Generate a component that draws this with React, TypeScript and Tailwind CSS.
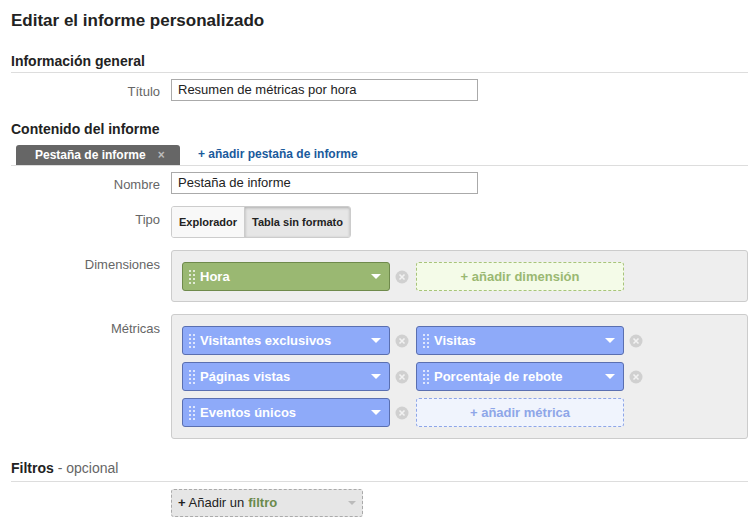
import React from "react";

const Drag = () => (
  <span className="grid grid-cols-2 gap-x-[2px] gap-y-[2px] mr-[5px]">
    {Array.from({ length: 8 }).map((_, i) => (
      <span key={i} className="w-[2px] h-[2px] bg-white/70" />
    ))}
  </span>
);

const Caret = () => (
  <span className="ml-auto w-0 h-0 border-l-[5px] border-r-[5px] border-t-[5px] border-l-transparent border-r-transparent border-t-white" />
);

const XCircle = () => (
  <svg width="14" height="14" viewBox="0 0 14 14" className="mx-[5px] shrink-0">
    <circle cx="7" cy="7" r="6.5" fill="#d0d0d0" />
    <path d="M4.5 4.5l5 5M9.5 4.5l-5 5" stroke="#f2f2f2" strokeWidth="1.6" />
  </svg>
);

const Chip = ({ label, color }: { label: string; color: "green" | "blue" }) => (
  <div className="flex items-center">
    <div
      className={
        "w-[208px] h-[29px] rounded-[3px] border flex items-center pl-[6px] pr-[8px] text-white font-bold text-[13px] " +
        (color === "green" ? "bg-[#9ab872] border-[#6f8a4c]" : "bg-[#8eaaf9] border-[#5a6fb0]")
      }
    >
      <Drag />
      <span>{label}</span>
      <Caret />
    </div>
    <XCircle />
  </div>
);

const Add = ({ label, color }: { label: string; color: "green" | "blue" }) => (
  <div className="flex items-center">
    <div
      className={
        "w-[208px] h-[29px] rounded-[3px] border border-dashed flex items-center justify-center font-bold text-[13px] " +
        (color === "green"
          ? "bg-[#f4fbe8] border-[#a8c47a] text-[#9ab872]"
          : "bg-[#f0f4fd] border-[#8ea6e8] text-[#8ea6e8]")
      }
    >
      {label}
    </div>
    <span className="w-[24px]" />
  </div>
);

const Row = ({ label, children, top = "pt-[3px]" }: { label: string; children: React.ReactNode; top?: string }) => (
  <div className="flex">
    <div className={"w-[160px] text-right text-[13px] text-[#666] " + top}>{label}</div>
    <div className="ml-[11px] flex-1">{children}</div>
  </div>
);

export default function App() {
  return (
    <div className="w-[756px] h-[522px] bg-white text-[#222] overflow-hidden" style={{ fontFamily: '"Liberation Sans", Arial, sans-serif' }}>
      <div className="pl-[11px] pr-[8px]">
        <h1 className="text-[17px] font-bold pt-[10px] leading-[22px]">Editar el informe personalizado</h1>
        <h2 className="text-[14px] font-bold mt-[20px] leading-[18px] pb-[2px] border-b border-[#ddd]">Información general</h2>
      </div>
      <div className="mt-[6px]">
        <Row label="Título">
          <div className="w-[307px] h-[22px] border border-[#aaa] flex items-center px-[6px] text-[13px]">Resumen de métricas por hora</div>
        </Row>
      </div>
      <div className="pl-[11px] pr-[8px]">
        <h2 className="text-[14px] font-bold mt-[18px] leading-[18px]">Contenido del informe</h2>
        <div className="flex items-end mt-[7px] border-b border-[#ddd] pl-[5px]">
          <div className="w-[164px] h-[20px] bg-[#666] rounded-t-[3px] text-white font-bold text-[12px] flex items-center pl-[19px]">
            Pestaña de informe<span className="ml-[12px] text-[#bbb]">×</span>
          </div>
          <div className="ml-[18px] mb-[2px] text-[12px] font-bold text-[#1a5a9c]">+ añadir pestaña de informe</div>
        </div>
      </div>
      <div className="mt-[6px] flex flex-col gap-[12px] pr-[8px]">
        <Row label="Nombre">
          <div className="w-[307px] h-[22px] border border-[#aaa] flex items-center px-[6px] text-[13px]">Pestaña de informe</div>
        </Row>
        <Row label="Tipo" top="pt-[4px]">
          <div className="inline-flex h-[32px] border border-[#ccc] rounded-[3px] text-[11px] font-bold overflow-hidden">
            <div className="px-[7px] flex items-center bg-[#f8f8f8]">Explorador</div>
            <div className="px-[7px] flex items-center bg-[#e6e6e6] border-l border-[#ccc] shadow-[inset_0_1px_3px_rgba(0,0,0,0.25)]">Tabla sin formato</div>
          </div>
        </Row>
        <Row label="Dimensiones" top="pt-[5px]">
          <div className="bg-[#eeeeee] border border-[#ccc] rounded-[3px] px-[10px] py-[11px] h-[52px]">
            <div className="flex gap-[2px]">
              <Chip label="Hora" color="green" />
              <Add label="+ añadir dimensión" color="green" />
            </div>
          </div>
        </Row>
        <Row label="Métricas" top="pt-[5px]">
          <div className="bg-[#eeeeee] border border-[#ccc] rounded-[3px] px-[10px] py-[11px] flex flex-col gap-[7px]">
            <div className="flex gap-[2px]"><Chip label="Visitantes exclusivos" color="blue" /><Chip label="Visitas" color="blue" /></div>
            <div className="flex gap-[2px]"><Chip label="Páginas vistas" color="blue" /><Chip label="Porcentaje de rebote" color="blue" /></div>
            <div className="flex gap-[2px]"><Chip label="Eventos únicos" color="blue" /><Add label="+ añadir métrica" color="blue" /></div>
          </div>
        </Row>
      </div>
      <div className="pl-[11px] pr-[8px]">
        <h2 className="text-[14px] mt-[20px] leading-[18px] pb-[4px] border-b border-[#ddd]"><b>Filtros</b> <span className="text-[#666]">- opcional</span></h2>
      </div>
      <div className="pl-[171px] mt-[7px]">
        <div className="w-[192px] h-[28px] bg-[#e6e6e6] border border-dashed border-[#aaa] rounded-[3px] flex items-center px-[6px] text-[13px]">
          <b className="mr-[3px]">+</b>Añadir un <b className="ml-[4px] text-[#6b8a4c]">filtro</b>
          <span className="ml-auto w-0 h-0 border-l-[4px] border-r-[4px] border-t-[4px] border-l-transparent border-r-transparent border-t-[#bbb]" />
        </div>
      </div>
    </div>
  );
}
